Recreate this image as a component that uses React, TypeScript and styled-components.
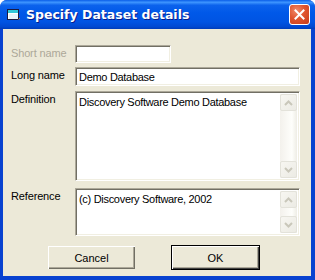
import React from 'react';
import styled, { createGlobalStyle } from 'styled-components';

const GlobalStyle = createGlobalStyle`
    html, body {
        margin: 0;
        padding: 0;
        background: #ffffff;
    }
    body {
        font-family: "Liberation Sans", Arial, sans-serif;
    }
`

const Window = styled.div`
    width: 315px;
    height: 280px;
    box-sizing: border-box;
    display: flex;
    flex-direction: column;
    background: #0842d0;
    border-radius: 7px 7px 0 0;
    overflow: hidden;
`

const TitleBar = styled.div`
    height: 29px;
    flex: none;
    display: flex;
    align-items: center;
    padding: 0 5px 0 7px;
    background: linear-gradient(to bottom, #0a5ee8 0%, #3d95ff 8%, #0b62ec 18%, #0058e8 45%, #0054e3 75%, #0049d2 92%, #003cb8 100%);
`

const Title = styled.span`
    flex: 1;
    margin-left: 5px;
    color: #ffffff;
    font-family: "DejaVu Sans", Verdana, sans-serif;
    font-weight: bold;
    font-size: 12.5px;
    text-shadow: 1px 1px 0 #0a1e8c;
`

const CloseButton = styled.div`
    width: 21px;
    height: 21px;
    box-sizing: border-box;
    border: 1px solid #ffffff;
    border-radius: 3px;
    background: radial-gradient(circle at 35% 30%, #f08a6a 0%, #e0552f 45%, #c83c1a 100%);
    display: flex;
    align-items: center;
    justify-content: center;
`

const Body = styled.div`
    flex: 1;
    margin: 0 4px 4px 3px;
    background: #ece9d8;
    padding: 16px 11px 0 8px;
    display: flex;
    flex-direction: column;
`

const Row = styled.div<{ $height: number; $top?: number }>`
    display: flex;
    height: ${p => p.$height}px;
    margin-top: ${p => p.$top || 0}px;
`

const Label = styled.div<{ $disabled?: boolean }>`
    width: 64px;
    flex: none;
    font-size: 11px;
    letter-spacing: -0.15px;
    color: ${p => (p.$disabled ? '#aca899' : '#000000')};
    padding-top: 2px;
    white-space: nowrap;
`

const Field = styled.div<{ $width?: number }>`
    box-sizing: border-box;
    flex: ${p => (p.$width ? 'none' : '1')};
    width: ${p => (p.$width ? `${p.$width}px` : 'auto')};
    height: 100%;
    background: #ffffff;
    border-top: 1px solid #aca899;
    border-left: 1px solid #aca899;
    border-right: 1px solid #ffffff;
    border-bottom: 1px solid #ffffff;
    box-shadow: inset 1px 1px 0 #716f64, inset -1px -1px 0 #f1efe2;
    font-size: 11px;
    letter-spacing: -0.3px;
    color: #000000;
    padding: 3px 3px 0 3px;
    white-space: nowrap;
    overflow: hidden;
`

const TextArea = styled(Field)`
    display: flex;
    padding: 0;
`

const AreaText = styled.div`
    flex: 1;
    padding: 4px 3px 0 3px;
`

const ScrollBar = styled.div`
    width: 17px;
    margin: 2px 2px 2px 0;
    display: flex;
    flex-direction: column;
    justify-content: space-between;
    background: linear-gradient(to right, #f3f1ec, #fefefb 70%, #eeede5);
`

const Arrow = styled.div`
    height: 17px;
    box-sizing: border-box;
    border: 1px solid #e3e2da;
    border-radius: 2px;
    background: linear-gradient(to bottom right, #f7f6f1, #ecebe4);
    display: flex;
    align-items: center;
    justify-content: center;
`

const ButtonRow = styled.div`
    display: flex;
    gap: 35px;
    margin-top: 9px;
    padding-left: 36px;
`

const Button = styled.div<{ $default?: boolean }>`
    width: 89px;
    height: 25px;
    box-sizing: border-box;
    display: flex;
    align-items: center;
    justify-content: center;
    font-size: 11px;
    color: #000000;
    background: #ece9d8;
    border: 1px solid ${p => (p.$default ? '#000000' : '#ece9d8')};
    box-shadow: ${p =>
        p.$default
            ? 'inset 1px 1px 0 #ffffff, inset -1px -1px 0 #404040, inset -2px -2px 0 #aca899'
            : 'inset 1px 1px 0 #ffffff, inset -1px -1px 0 #716f64, inset -2px -2px 0 #aca899'};
`

const ArrowIcon: React.FC<{ up?: boolean }> = ({ up }) => (
    <svg width="9" height="6" viewBox="0 0 9 6">
        <path d={up ? 'M1 5 L4.5 1.5 L8 5' : 'M1 1 L4.5 4.5 L8 1'} fill="none" stroke="#c9c7ba" strokeWidth="2" />
    </svg>
)

const Scroll: React.FC = () => (
    <ScrollBar>
        <Arrow><ArrowIcon up /></Arrow>
        <Arrow><ArrowIcon /></Arrow>
    </ScrollBar>
)

export default function App() {
    return (
        <>
            <GlobalStyle />
            <Window>
                <TitleBar>
                    <svg width="14" height="12" viewBox="0 0 14 12">
                        <rect x="0.5" y="0.5" width="11" height="10" fill="#ffffff" stroke="#1a1a40" />
                        <rect x="1" y="1" width="10" height="3" fill="#30c8d8" />
                        <rect x="2" y="5" width="9" height="5" fill="#e8f4f8" />
                        <path d="M11.5 10.5 L13 9" stroke="#d08040" />
                    </svg>
                    <Title>Specify Dataset details</Title>
                    <CloseButton>
                        <svg width="11" height="11" viewBox="0 0 11 11">
                            <path d="M1.5 1.5 L9.5 9.5 M9.5 1.5 L1.5 9.5" stroke="#ffffff" strokeWidth="2" strokeLinecap="square" />
                        </svg>
                    </CloseButton>
                </TitleBar>
                <Body>
                    <Row $height={18}>
                        <Label $disabled>Short name</Label>
                        <Field $width={96}></Field>
                    </Row>
                    <Row $height={19} $top={4}>
                        <Label>Long name</Label>
                        <Field>Demo Database</Field>
                    </Row>
                    <Row $height={90} $top={5}>
                        <Label>Definition</Label>
                        <TextArea>
                            <AreaText>Discovery Software Demo Database</AreaText>
                            <Scroll />
                        </TextArea>
                    </Row>
                    <Row $height={48} $top={7}>
                        <Label>Reference</Label>
                        <TextArea>
                            <AreaText>(c) Discovery Software, 2002</AreaText>
                            <Scroll />
                        </TextArea>
                    </Row>
                    <ButtonRow>
                        <Button>Cancel</Button>
                        <Button $default>OK</Button>
                    </ButtonRow>
                </Body>
            </Window>
        </>
    );
}
